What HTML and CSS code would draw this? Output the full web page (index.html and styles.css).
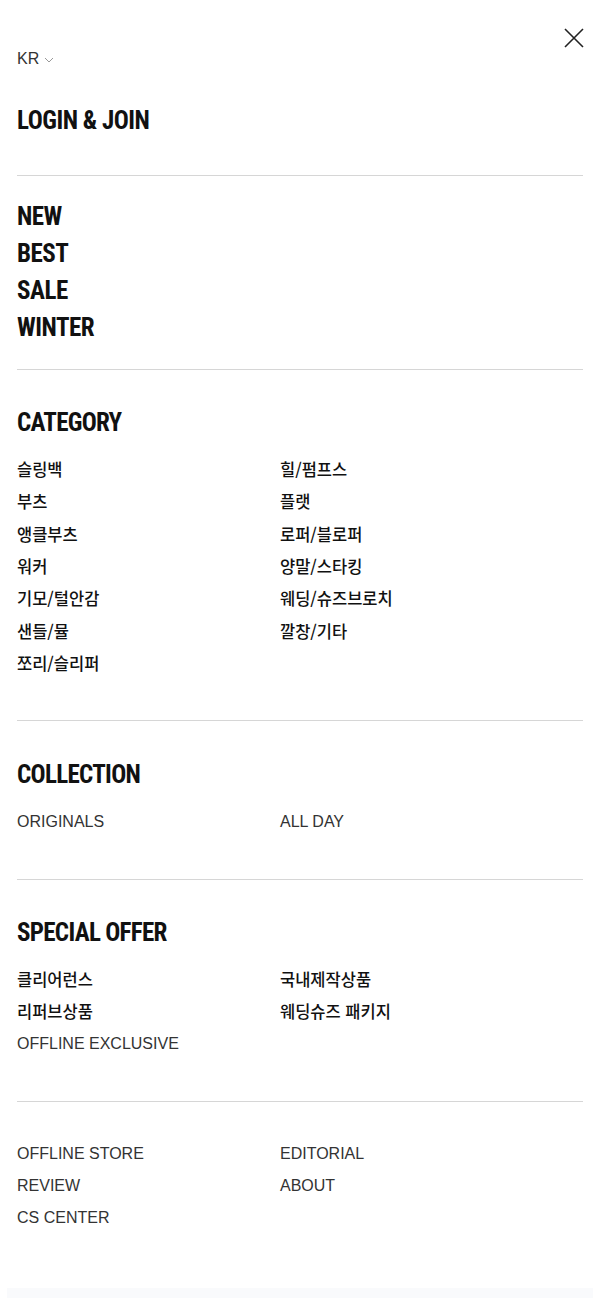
FILE: index.html
```html
<!DOCTYPE html>
<html lang="ko">
<head>
<meta charset="utf-8">
<title>Menu</title>
<link rel="stylesheet" href="styles.css">
</head>
<body>
<div class="menu">
  <button class="close" aria-label="close">
    <svg width="20" height="20" viewBox="0 0 20 20"><path d="M1 1 L19 19 M19 1 L1 19" stroke="#222" stroke-width="1.6" fill="none"/></svg>
  </button>
  <div class="lang">KR<svg class="chev" width="10" height="6" viewBox="0 0 10 6"><path d="M1 1 L5 5 L9 1" stroke="#999" stroke-width="1" fill="none"/></svg></div>
  <section class="sec sec-login">
    <a class="big">LOGIN &amp; JOIN</a>
  </section>
  <section class="sec sec-main">
    <a class="big">NEW</a>
    <a class="big">BEST</a>
    <a class="big">SALE</a>
    <a class="big">WINTER</a>
  </section>
  <section class="sec">
    <h2 class="big head">CATEGORY</h2>
    <ul class="grid kr">
      <li>슬링백</li><li>힐/펌프스</li>
      <li>부츠</li><li>플랫</li>
      <li>앵클부츠</li><li>로퍼/블로퍼</li>
      <li>워커</li><li>양말/스타킹</li>
      <li>기모/털안감</li><li>웨딩/슈즈브로치</li>
      <li>샌들/뮬</li><li>깔창/기타</li>
      <li>쪼리/슬리퍼</li>
    </ul>
  </section>
  <section class="sec sec-coll">
    <h2 class="big head">COLLECTION</h2>
    <ul class="grid en">
      <li>ORIGINALS</li><li>ALL DAY</li>
    </ul>
  </section>
  <section class="sec">
    <h2 class="big head">SPECIAL OFFER</h2>
    <ul class="grid">
      <li class="kr">클리어런스</li><li class="kr">국내제작상품</li>
      <li class="kr">리퍼브상품</li><li class="kr">웨딩슈즈 패키지</li>
      <li class="en">OFFLINE EXCLUSIVE</li>
    </ul>
  </section>
  <section class="sec sec-foot">
    <ul class="grid en">
      <li>OFFLINE STORE</li><li>EDITORIAL</li>
      <li>REVIEW</li><li>ABOUT</li>
      <li>CS CENTER</li>
    </ul>
  </section>
  <div class="band"></div>
</div>
</body>
</html>
```
FILE: styles.css
```css
* { box-sizing: border-box; }
html, body { margin: 0; padding: 0; background: #fff; }
body { font-family: "Liberation Sans", Arial, sans-serif; color: #222; }

.menu { position: relative; width: 600px; height: 1299px; padding: 49px 17px 0; overflow: hidden; }

.close {
  position: absolute; top: 28px; right: 16px;
  width: 20px; height: 20px; padding: 0; border: 0; background: none;
}
.close svg { display: block; }

.lang { font-size: 16px; line-height: 20px; color: #333; display: flex; align-items: center; }
.chev { margin-left: 5px; margin-top: 2px; }

.big {
  display: block; margin: 0;
  font-family: "Roboto", sans-serif;
  font-stretch: 75%;
  font-weight: 700; font-size: 25px; line-height: 30px; color: #111;
  letter-spacing: -0.5px;
}
.head { padding-top: 2px; letter-spacing: -0.7px; }

.sec { border-bottom: 1px solid #d6d6d6; padding: 36px 0 41px; }
.sec-login { margin-top: 37px; padding: 0 0 39px; border-bottom: 1px solid #d6d6d6; }
.sec-main { padding: 22px 0 23px; }
.sec-main .big { line-height: 37px; }
.sec-coll { padding-top: 37px; }
.sec-foot { border-bottom: 0; padding-top: 35px; }

.grid {
  list-style: none; margin: 15px 0 0; padding: 0;
  display: grid; grid-template-columns: 263px 1fr;
}
.sec-foot .grid { margin-top: 0; }
.grid li { line-height: 32.33px; height: 32.33px; white-space: nowrap; }
.kr, .kr li { font-family: "Noto Sans CJK KR", sans-serif; font-size: 16.5px; font-weight: 500; color: #111; }
.en, .en li { font-family: "Liberation Sans", Arial, sans-serif; font-size: 16px; font-weight: 400; color: #333; }
.grid.en li, .grid li.en { padding-top: 2px; line-height: 30.33px; }

.band { position: absolute; left: 7px; right: 7px; top: 1288px; height: 10px; background: #f9fafc; }
```
